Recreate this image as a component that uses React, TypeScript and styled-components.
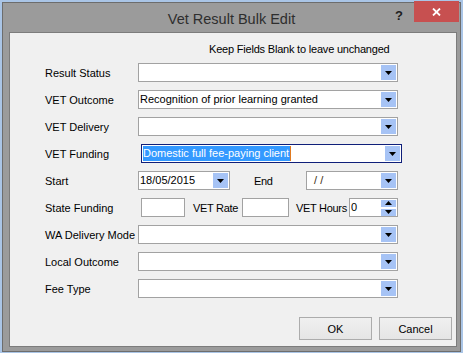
import React from "react";
import styled, { createGlobalStyle } from "styled-components";

const GlobalStyle = createGlobalStyle`
  html, body {
    margin: 0;
    padding: 0;
    background: #aac5e6;
    overflow: hidden;
  }
  #root {
    width: 463px;
    height: 353px;
  }
`;

const Window = styled.div`
  box-sizing: border-box;
  margin: 2px 0 0 2px;
  width: 459px;
  height: 350px;
  border: 1px solid #6d6d6d;
  background: #9b9b9b;
  display: flex;
  flex-direction: column;
  font-family: "Liberation Sans", Arial, sans-serif;
  font-size: 11px;
  color: #000;
`;

const TitleBar = styled.div`
  height: 29px;
  display: grid;
  grid-template-columns: 1fr auto 1fr;
  align-items: start;
`;

const Title = styled.div`
  font-size: 14.5px;
  color: #2e2e2e;
  line-height: 18px;
  padding-top: 7px;
  white-space: nowrap;
`;

const TitleControls = styled.div`
  display: flex;
  justify-content: flex-end;
  align-items: flex-start;
  padding-right: 1px;
`;

const HelpGlyph = styled.div`
  font-weight: bold;
  font-size: 13px;
  color: #1e1e1e;
  line-height: 14px;
  padding-top: 6px;
  margin-right: 11px;
`;

const CloseButton = styled.div`
  width: 45px;
  height: 21px;
  margin-top: -2px;
  background: #c75050;
  display: flex;
  align-items: center;
  justify-content: center;
`;

const Client = styled.div`
  flex: 1;
  margin: 0 3px 4px 6px;
  border: 1px solid #7c7c7c;
  background: #f0f0f0;
  padding-top: 9px;
  display: flex;
  flex-direction: column;
`;

const Note = styled.div`
  height: 14px;
  line-height: 14px;
  padding-left: 199px;
  letter-spacing: -0.2px;
  white-space: nowrap;
`;

const Rows = styled.div`
  margin-top: 7px;
  display: flex;
  flex-direction: column;
  gap: 8px;
`;

const Row = styled.div`
  display: flex;
  align-items: center;
  height: 19px;
  padding-left: 35px;
`;

const Label = styled.div`
  width: 93px;
  flex-shrink: 0;
  white-space: nowrap;
`;

const InlineLabel = styled.div<{ $ml: number; $w: number }>`
  margin-left: ${({ $ml }) => $ml}px;
  width: ${({ $w }) => $w}px;
  flex-shrink: 0;
  white-space: nowrap;
  letter-spacing: -0.3px;
`;

const Field = styled.div<{ $w: number; $ml?: number; $focused?: boolean }>`
  box-sizing: border-box;
  width: ${({ $w }) => $w}px;
  height: 19px;
  margin-left: ${({ $ml }) => $ml ?? 0}px;
  border: 1px solid ${({ $focused }) => ($focused ? "#0f1f7a" : "#a2a2a2")};
  background: #fff;
  display: flex;
  align-items: center;
  padding: 0 1px 0 1px;
  flex-shrink: 0;
`;

const FieldText = styled.div<{ $color?: string }>`
  flex: 1;
  white-space: nowrap;
  overflow: hidden;
  color: ${({ $color }) => $color ?? "#000"};
  line-height: 15px;
`;

const Selected = styled.span`
  background: #3399ff;
  color: #fff;
  display: inline-block;
  line-height: 15px;
  padding-right: 1px;
  border-right: 1px solid #e07a20;
`;

const DropButton = styled.div`
  width: 15px;
  height: 15px;
  background: #a6c3f5;
  display: flex;
  align-items: center;
  justify-content: center;
  flex-shrink: 0;
`;

const SpinColumn = styled.div`
  display: flex;
  flex-direction: column;
  gap: 2px;
  flex-shrink: 0;
`;

const SpinHalf = styled.div`
  width: 15px;
  height: 7px;
  background: #a6c3f5;
  display: flex;
  align-items: center;
  justify-content: center;
`;

const ButtonRow = styled.div`
  margin-top: 19px;
  display: flex;
  justify-content: flex-end;
  gap: 7px;
  padding-right: 4px;
`;

const PushButton = styled.div`
  box-sizing: border-box;
  width: 73px;
  height: 23px;
  border: 1px solid #acacac;
  background: linear-gradient(#f0f0f0, #e5e5e5);
  display: flex;
  align-items: center;
  justify-content: center;
  font-size: 11px;
`;

const Arrow = ({ up }: { up?: boolean }) => (
  <svg width="7" height="4" viewBox="0 0 7 4">
    <polygon points={up ? "0,4 7,4 3.5,0" : "0,0 7,0 3.5,4"} fill="#000" />
  </svg>
);

const Combo = ({
  value,
  width = 260,
  ml,
  focused,
  color,
}: {
  value?: React.ReactNode;
  width?: number;
  ml?: number;
  focused?: boolean;
  color?: string;
}) => (
  <Field $w={width} $ml={ml} $focused={focused}>
    <FieldText $color={color}>{value}</FieldText>
    <DropButton>
      <Arrow />
    </DropButton>
  </Field>
);

const App: React.FC = () => {
  return (
    <>
      <GlobalStyle />
      <Window>
        <TitleBar>
          <div />
          <Title>Vet Result Bulk Edit</Title>
          <TitleControls>
            <HelpGlyph>?</HelpGlyph>
            <CloseButton>
              <svg width="9" height="8" viewBox="0 0 9 8">
                <path d="M1 0.5 L8 7.5 M8 0.5 L1 7.5" stroke="#fff" strokeWidth="1.8" />
              </svg>
            </CloseButton>
          </TitleControls>
        </TitleBar>
        <Client>
          <Note>Keep Fields Blank to leave unchanged</Note>
          <Rows>
            <Row>
              <Label>Result Status</Label>
              <Combo />
            </Row>
            <Row>
              <Label>VET Outcome</Label>
              <Combo value="Recognition of prior learning granted" />
            </Row>
            <Row>
              <Label>VET Delivery</Label>
              <Combo />
            </Row>
            <Row>
              <Label>VET Funding</Label>
              <Combo
                width={261}
                ml={3}
                focused
                value={<Selected>Domestic full fee-paying client</Selected>}
              />
            </Row>
            <Row>
              <Label>Start</Label>
              <Combo width={92} value="18/05/2015" />
              <InlineLabel $ml={24} $w={28}>End</InlineLabel>
              <Combo width={92} ml={24} value={"\u00a0\u00a0/\u00a0/"} color="#3a2a10" />
            </Row>
            <Row>
              <Label>State Funding</Label>
              <Field $w={44} $ml={3} />
              <InlineLabel $ml={8} $w={49}>VET Rate</InlineLabel>
              <Field $w={47} />
              <InlineLabel $ml={7} $w={53}>VET Hours</InlineLabel>
              <Field $w={49}>
                <FieldText>0</FieldText>
                <SpinColumn>
                  <SpinHalf>
                    <Arrow up />
                  </SpinHalf>
                  <SpinHalf>
                    <Arrow />
                  </SpinHalf>
                </SpinColumn>
              </Field>
            </Row>
            <Row>
              <Label>WA Delivery Mode</Label>
              <Combo />
            </Row>
            <Row>
              <Label>Local Outcome</Label>
              <Combo />
            </Row>
            <Row>
              <Label>Fee Type</Label>
              <Combo />
            </Row>
          </Rows>
          <ButtonRow>
            <PushButton>OK</PushButton>
            <PushButton>Cancel</PushButton>
          </ButtonRow>
        </Client>
      </Window>
    </>
  );
};

export default App;
